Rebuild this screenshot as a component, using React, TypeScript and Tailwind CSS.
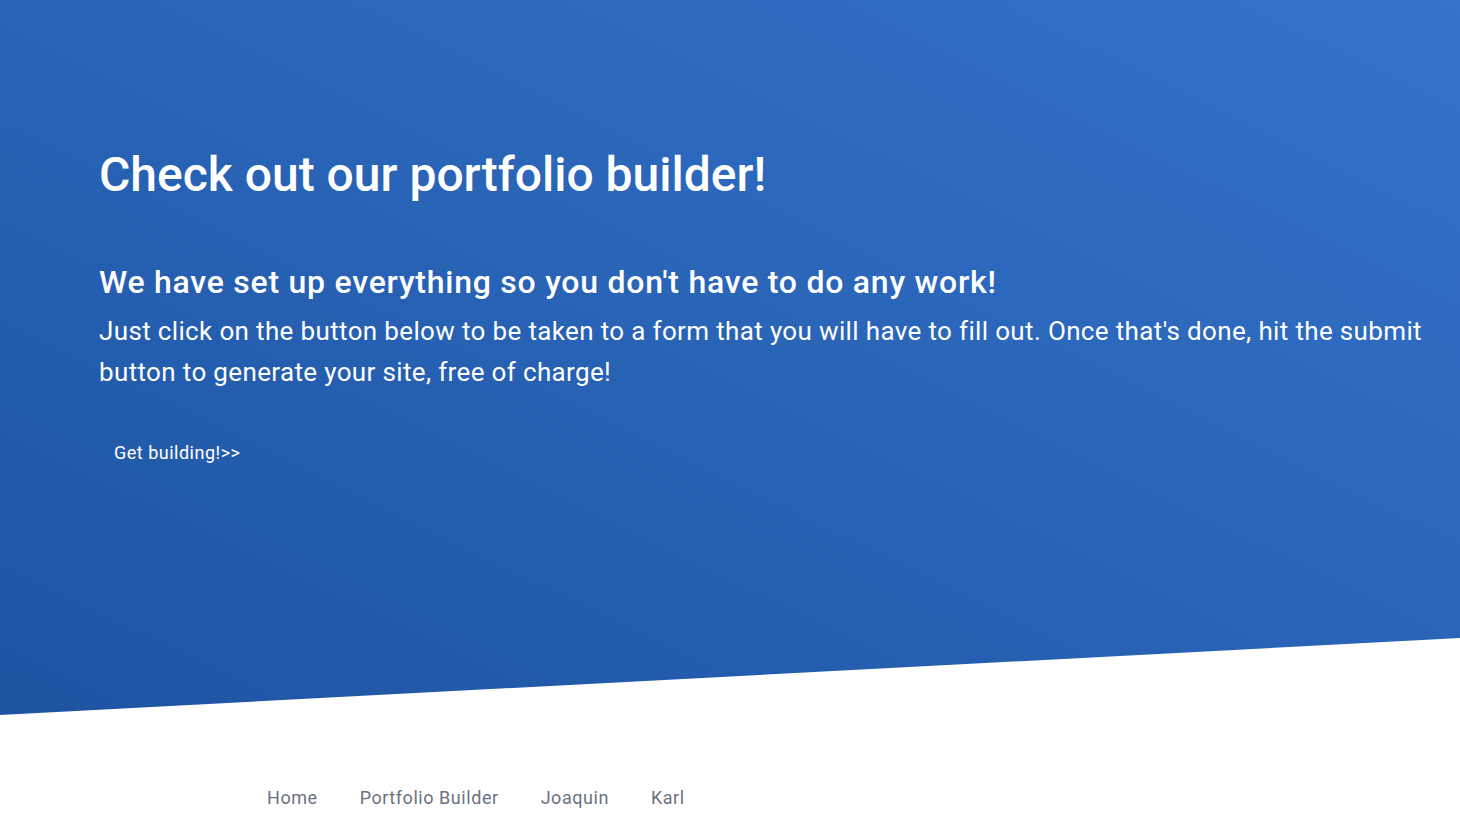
import React from 'react';

const links = ['Home', 'Portfolio Builder', 'Joaquin', 'Karl'];

export default function App() {
  return (
    <div className="min-h-screen bg-white font-['Roboto',sans-serif]">
      <section className="h-[715px] bg-linear-to-bl from-[#3473ca] to-[#1e54a2] [clip-path:polygon(0_0,100%_0,100%_638px,0_100%)]">
        <div className="pl-[99px] pr-6 pt-[146px] text-white">
          <h1 className="text-[48px] font-medium leading-[58px]">Check out our portfolio builder!</h1>
          <h2 className="mt-[58px] text-[32px] font-medium leading-[40px] tracking-[0.75px]">
            We have set up everything so you don't have to do any work!
          </h2>
          <p className="mt-[9px] text-[26px] font-normal leading-[41px] tracking-[0.35px]">
            Just click on the button below to be taken to a form that you will have to fill out. Once that's done, hit the submit button to generate your site, free of charge!
          </p>
          <button className="mt-[39px] px-[15px] py-2 text-[18px] leading-[26px] tracking-[0.5px]">Get building!&gt;&gt;</button>
        </div>
      </section>
      <nav className="flex gap-[42px] pl-[267px] pt-[69px] text-[18px] tracking-[0.55px] text-[#6b7280]">
        {links.map(l => (
          <a key={l} href="#">{l}</a>
        ))}
      </nav>
    </div>
  );
}
